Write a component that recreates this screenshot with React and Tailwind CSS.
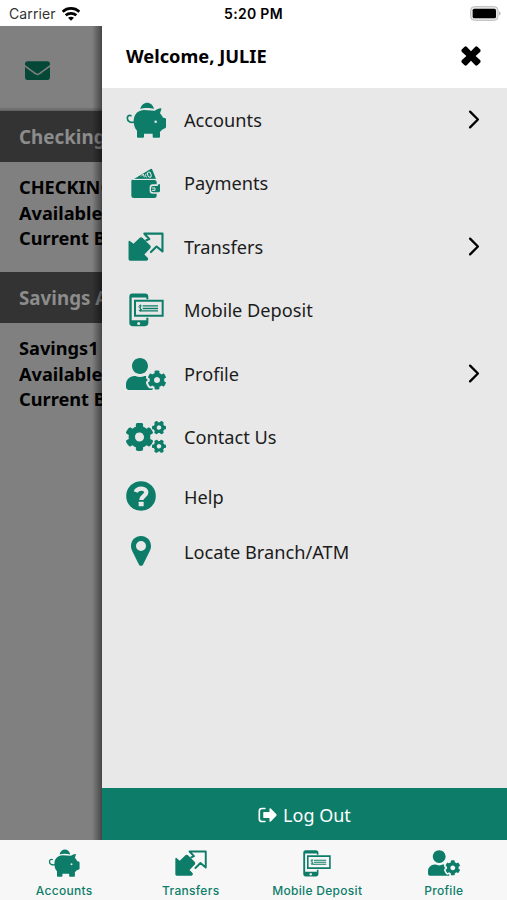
import React from 'react';
import { FaEnvelope, FaUserCog, FaCogs } from 'react-icons/fa';

const PigIcon = ({ className }) => (
  <svg viewBox="0 0 120 108" className={className} fill="currentColor">
    <path d="M43 21 C48 -4 79 -4 84 21 C72 17 54 17 43 21Z" />
    <path d="M23 57 C23 37 36 25 54 24 L86 26 C92 22 99 20 104 19 Q107 19 106 22 L102 34 C107 40 109 43 111 47 L117 48 Q120 49 120 52 V75 Q120 78 117 79 L108 83 C106 86 103 88 102 90 V104 Q102 107 99 107 H83 Q80 107 80 104 V95 H54 V104 Q54 107 51 107 H36 Q33 107 33 104 V86 C26 79 23 68 23 57Z" />
    <path d="M25 60 C14 64 4 58 4 49 C4 41 9 39 15 41" fill="none" stroke="currentColor" strokeWidth="5" strokeLinecap="round" />
    <circle cx="89" cy="59" r="3.8" fill="#e8e8e8" />
  </svg>
);

const WalletIcon = ({ className }) => (
  <svg viewBox="0 0 90 93" className={className} fill="currentColor">
    <path d="M9 33 L59 3 Q62 1 64 5 L75 33Z" />
    <g fill="none" stroke="#e8e8e8" strokeWidth="3">
      <ellipse cx="55" cy="20" rx="5" ry="8" transform="rotate(-18 55 20)" />
      <path d="M31 25 L37 18 L40 28 M46 17 L42 23 L48 28" />
      <path d="M7 34 H77" strokeWidth="2.5" />
    </g>
    <path d="M5 35 Q1 35 1 39 V83 Q1 90 8 90 H70 Q77 90 77 83 V77 H65 Q56 77 56 68 V59 Q56 49 65 49 H77 V42 Q77 36 70 36 H8Z" />
    <path d="M66 54 H78 Q82 54 82 49 H87 V69 Q87 73 82 73 H66 Q60 73 60 67 V60 Q60 54 66 54Z" />
    <path d="M62 60 H72 V67 H63" fill="none" stroke="#e8e8e8" strokeWidth="3" />
  </svg>
);

const TransferIcon = ({ className }) => (
  <svg viewBox="0 0 108 88" className={className} fill="currentColor">
    <path d="M5 27 L16 36 L36 17 Q40 14 44 18 L67 41 Q70 45 67 49 L49 68 L60 79 Q62 86 56 87 H6 Q1 87 1 82 V31 Q1 25 5 27Z" />
    <path d="M49 5 H104 V59 L86 44 L69 61 M49 5 L64 21 L55 25" fill="none" stroke="currentColor" strokeWidth="6.5" strokeLinejoin="round" strokeLinecap="round" />
  </svg>
);

const DepositIcon = ({ className }) => (
  <svg viewBox="0 0 105 101" className={className} fill="currentColor">
    <path fillRule="evenodd" d="M10 1 H48 Q58 1 58 11 V18 H52 V13 H8 V81 H52 V74 H58 V89 Q58 99 48 99 H10 Q1 99 1 89 V11 Q1 1 10 1Z" />
    <circle cx="29" cy="91" r="4.5" fill="#e8e8e8" />
    <path d="M18 23 H101 V68 H18Z" fill="none" stroke="currentColor" strokeWidth="6" />
    <path d="M41 38 H87 M41 46 H87 M36 53 H87" stroke="currentColor" strokeWidth="4" />
    <path d="M38 38 Q30 35 30 40 Q30 44 34 45 Q38 47 37 51 Q34 55 29 51 M34 34 V56" fill="none" stroke="currentColor" strokeWidth="3" />
  </svg>
);

const HelpIcon = ({ className }) => (
  <svg viewBox="0 0 90 90" className={className}>
    <circle cx="45" cy="45" r="44.5" fill="currentColor" />
    <path d="M29 33 C35 19 61 20 61 34 C61 45 46 45 46 57" fill="none" stroke="#e8e8e8" strokeWidth="13" />
    <rect x="38" y="62" width="15" height="14" rx="2" fill="#e8e8e8" />
  </svg>
);

const PinIcon = ({ className }) => (
  <svg viewBox="0 0 60 90" className={className} fill="currentColor">
    <path fillRule="evenodd" d="M30 0 C47 0 60 13 60 30 C60 37 58 41 56 46 L36 86 Q30 93 24 86 L4 46 C2 41 0 37 0 30 C0 13 13 0 30 0Z M30 15 A15 15 0 1 0 30 45 A15 15 0 1 0 30 15Z" />
  </svg>
);

const WifiIcon = () => (
  <svg viewBox="0 0 54 42" className="w-[18px] h-[14px]" fill="none" stroke="black" strokeWidth="8">
    <path d="M2 14 C16 1 38 1 52 14" />
    <path d="M11 25 C20 17 34 17 43 25" />
    <path d="M18 32 Q27 26 36 32 L27 41Z" fill="black" stroke="none" />
  </svg>
);

const CloseIcon = () => (
  <svg viewBox="0 0 56 56" className="w-5 h-5 -mt-0.5" fill="black">
    <path d="M2 10 L10 2 Q13 0 16 2 L28 15 L40 2 Q43 0 46 2 L54 10 Q56 13 54 16 L41 28 L54 40 Q56 43 54 46 L46 54 Q43 56 40 54 L28 41 L16 54 Q13 56 10 54 L2 46 Q0 43 2 40 L15 28 L2 16 Q0 13 2 10Z" />
  </svg>
);

const Chevron = () => (
  <svg viewBox="0 0 36 58" className="w-3 h-[19px] mr-[27px]" fill="none" stroke="black" strokeWidth="7" strokeLinecap="round" strokeLinejoin="round">
    <path d="M6 5 L30 29 L6 53" />
  </svg>
);

const LogoutIcon = () => (
  <svg viewBox="0 0 58 48" className="w-[19px] h-4" fill="currentColor">
    <path d="M21 4 H12 Q4 4 4 12 V36 Q4 44 12 44 H21" fill="none" stroke="currentColor" strokeWidth="5" strokeLinecap="round" />
    <path d="M18 15 H35 V5 Q36 2 39 4 L56 22 Q58 24 56 26 L39 44 Q36 46 35 43 V33 H18 Q16 33 16 31 V17 Q16 15 18 15Z" />
  </svg>
);

const menuItems = [
  { label: 'Accounts', icon: <PigIcon className="w-10 h-9" />, arrow: true },
  { label: 'Payments', icon: <WalletIcon className="w-[30px] h-[31px] ml-[5px]" /> },
  { label: 'Transfers', icon: <TransferIcon className="w-9 h-[29px] ml-0.5" />, arrow: true },
  { label: 'Mobile Deposit', icon: <DepositIcon className="w-[35px] h-[34px] ml-[3px]" /> },
  { label: 'Profile', icon: <FaUserCog className="w-10 h-8" />, arrow: true },
  { label: 'Contact Us', icon: <FaCogs className="w-10 h-8" /> },
  { label: 'Help', icon: <HelpIcon className="w-[30px] h-[30px] -mt-0.5" />, short: true },
  { label: 'Locate Branch/ATM', icon: <PinIcon className="w-5 h-[30px] ml-[5px] -mt-0.5" />, short: true },
];

const tabs = [
  { label: 'Accounts', icon: <PigIcon className="w-8 h-7" /> },
  { label: 'Transfers', icon: <TransferIcon className="w-8 h-[26px]" /> },
  { label: 'Mobile Deposit', icon: <DepositIcon className="w-7 h-[27px]" /> },
  { label: 'Profile', icon: <FaUserCog className="w-8 h-[26px]" /> },
];

const AccountSection = ({ title, name }) => (
  <section>
    <h2 className="h-[51px] pl-[19px] pt-0.5 flex items-center bg-[#333333] text-[#8c8c8c] text-[18.8px] font-bold">{title}</h2>
    <div className="h-[110px] pt-[13px] pl-[19px] text-[18.2px] leading-[25.7px] font-bold">
      <p>{name}</p>
      <p>Available Balance</p>
      <p>Current Balance</p>
    </div>
  </section>
);

const App = () => {
  return (
    <div className="w-[507px] h-[900px] flex flex-col overflow-hidden bg-white text-black font-['Noto_Sans',sans-serif]">
      <header className="h-[26px] shrink-0 grid grid-cols-3 items-center px-[9px] pt-px font-['Inter',sans-serif] text-sm">
        <div className="flex items-center gap-1.5 text-[#333] tracking-[0.1px]">
          <span>Carrier</span>
          <WifiIcon />
        </div>
        <span className="text-center font-semibold tracking-[0.3px]">5:20 PM</span>
        <svg viewBox="0 0 93 45" className="w-[31px] h-[15px] justify-self-end -mr-[3px]">
          <rect x="2" y="2" width="82" height="41" rx="11" fill="#e8e8e8" stroke="#bbb" strokeWidth="3" />
          <rect x="8" y="8" width="70" height="29" rx="5" fill="black" />
          <path d="M87 16 Q97 22 87 29Z" fill="#bbb" />
        </svg>
      </header>

      <main className="h-[814px] shrink-0 flex">
        <div className="relative w-[102px] shrink-0 overflow-hidden whitespace-nowrap bg-[#808080]">
          <div className="h-[85px] pl-[25px] pt-[3px] flex items-center">
            <FaEnvelope className="w-[25px] h-[25px] text-[#064837]" />
          </div>
          <AccountSection title="Checking Accounts" name="CHECKING1" />
          <AccountSection title="Savings Accounts" name="Savings1" />
          <div className="absolute inset-x-0 top-[81px] h-1 bg-linear-to-b from-transparent to-black/25" />
          <div className="absolute inset-y-0 right-0 w-2.5 bg-linear-to-r from-transparent to-black/45" />
        </div>

        <aside className="flex-1 flex flex-col bg-[#e8e8e8]">
          <div className="h-[62px] shrink-0 bg-white flex items-center justify-between pl-6 pr-[26px]">
            <h1 className="text-[18.3px] font-bold -mt-0.5">Welcome, JULIE</h1>
            <CloseIcon />
          </div>
          <nav className="flex-1">
            {menuItems.map((item) => (
              <a key={item.label} className={`flex items-center pl-6 ${item.short ? 'h-[55px]' : 'h-[63.5px]'}`}>
                <span className="w-[58px] text-[#0d7d69]">{item.icon}</span>
                <span className="flex-1 pt-[1.5px] text-[18.2px] text-[#1c1c1c]">{item.label}</span>
                {item.arrow && <Chevron />}
              </a>
            ))}
          </nav>
          <button className="h-[52px] shrink-0 flex items-center justify-center gap-1.5 bg-[#0d7d69] text-white text-lg pt-px">
            <LogoutIcon />
            Log Out
          </button>
        </aside>
      </main>

      <footer className="h-[60px] shrink-0 grid grid-cols-4 pl-px bg-[#f7f7f7] text-[#0d7d69] font-['Inter',sans-serif]">
        {tabs.map((tab) => (
          <div key={tab.label} className="flex flex-col items-center pt-[9px]">
            <span className="h-7 flex items-center">{tab.icon}</span>
            <span className="mt-[5px] text-xs leading-[18px] font-medium tracking-[0.3px] whitespace-nowrap">{tab.label}</span>
          </div>
        ))}
      </footer>
    </div>
  );
};

export default App;
